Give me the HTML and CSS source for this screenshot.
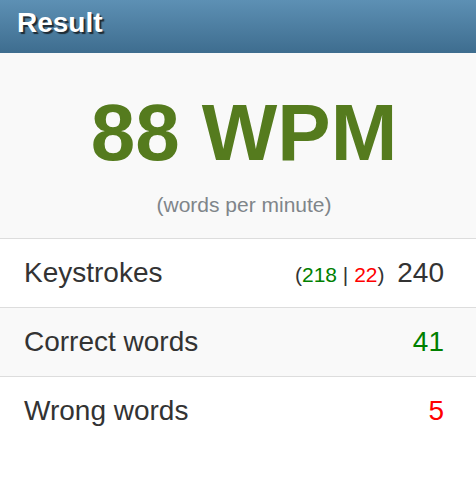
FILE: index.html
```html
<!DOCTYPE html>
<html>
<head>
<meta charset="utf-8">
<link rel="stylesheet" href="styles.css">
</head>
<body>
<div class="panel">
  <div class="panel-heading">Result</div>
  <div class="summary">
    <div class="wpm">88 WPM</div>
    <div class="wpm-sub">(words per minute)</div>
  </div>
  <ul class="stats">
    <li class="row">
      <span class="label">Keystrokes</span>
      <span class="value"><small class="detail">(<span class="good">218</span> | <span class="bad">22</span>)</small> 240</span>
    </li>
    <li class="row alt">
      <span class="label">Correct words</span>
      <span class="value good">41</span>
    </li>
    <li class="row">
      <span class="label">Wrong words</span>
      <span class="value bad">5</span>
    </li>
  </ul>
</div>
</body>
</html>
```

FILE: styles.css
```css
html, body {
  margin: 0;
  padding: 0;
  background: #fff;
}
body {
  font-family: "Liberation Sans", Arial, sans-serif;
  color: #333;
}
.panel-heading {
  height: 53px;
  box-sizing: border-box;
  padding: 0 0 7px 17px;
  line-height: 46px;
  font-size: 28px;
  font-weight: bold;
  color: #fff;
  text-shadow: 2px 2px 1px #1e2a33;
  background: linear-gradient(#5d90b4, #3e6d8f);
}
.summary {
  background: #f9f9f9;
  text-align: center;
  padding: 40px 0 23px 12px;
}
.wpm {
  font-size: 80px;
  line-height: 79px;
  font-weight: bold;
  color: #557b1e;
}
.wpm-sub {
  margin-top: 23px;
  font-size: 21px;
  line-height: 20px;
  color: #7f858a;
}
.stats {
  list-style: none;
  margin: 0;
  padding: 0;
}
.row {
  display: flex;
  justify-content: space-between;
  align-items: baseline;
  border-top: 1px solid #ddd;
  height: 68px;
  line-height: 68px;
  padding: 0 32px 0 24px;
  font-size: 28px;
  background: #fff;
}
.row.alt {
  background: #f9f9f9;
}
.detail {
  font-size: 21px;
  margin-right: 5px;
}
.good { color: #008000; }
.bad { color: #ff0000; }
```
